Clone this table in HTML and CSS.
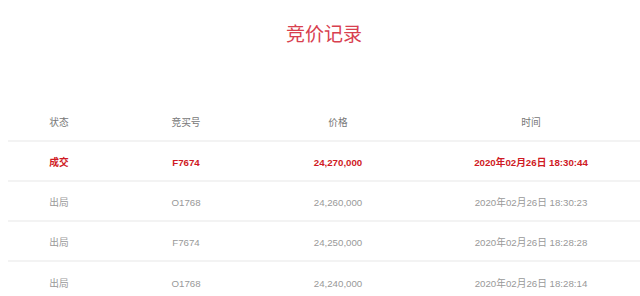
FILE: index.html
```html
<!DOCTYPE html>
<html lang="zh-CN">
<head>
<meta charset="utf-8">
<title>竞价记录</title>
<link rel="stylesheet" href="styles.css">
</head>
<body>
<div class="page">
  <h1 class="title">竞价记录</h1>
  <div class="table">
    <div class="row head">
      <div class="cell">状态</div>
      <div class="cell">竞买号</div>
      <div class="cell">价格</div>
      <div class="cell">时间</div>
    </div>
    <div class="row win">
      <div class="cell">成交</div>
      <div class="cell">F7674</div>
      <div class="cell">24,270,000</div>
      <div class="cell">2020年02月26日 18:30:44</div>
    </div>
    <div class="row">
      <div class="cell">出局</div>
      <div class="cell">O1768</div>
      <div class="cell">24,260,000</div>
      <div class="cell">2020年02月26日 18:30:23</div>
    </div>
    <div class="row">
      <div class="cell">出局</div>
      <div class="cell">F7674</div>
      <div class="cell">24,250,000</div>
      <div class="cell">2020年02月26日 18:28:28</div>
    </div>
    <div class="row">
      <div class="cell">出局</div>
      <div class="cell">O1768</div>
      <div class="cell">24,240,000</div>
      <div class="cell">2020年02月26日 18:28:14</div>
    </div>
  </div>
</div>
</body>
</html>
```

FILE: styles.css
```css
html, body {
  margin: 0;
  padding: 0;
  background: #fff;
  overflow: hidden;
}
body {
  font-family: "Liberation Sans", "Noto Sans CJK SC", sans-serif;
  width: 640px;
  height: 296px;
}
.page {
  padding-left: 8px;
}
.title {
  margin: 0;
  padding-top: 23px;
  height: 102px;
  box-sizing: border-box;
  text-align: center;
  font-weight: normal;
  font-size: 19px;
  line-height: 24px;
  color: #d8404f;
  width: 632px;
}
.table {
  width: 640px;
}
.row {
  display: grid;
  grid-template-columns: 102px 152px 152px 234px;
  height: 40px;
  box-sizing: border-box;
  padding-top: 2px;
  align-items: center;
  border-bottom: 2px solid #f3f3f3;
  font-size: 9.7px;
  color: #999;
}
.row:last-child {
  border-bottom: none;
}
.cell {
  text-align: center;
  white-space: nowrap;
}
.head {
  color: #777;
}
.win {
  color: #cf1a24;
  font-weight: bold;
}
```
